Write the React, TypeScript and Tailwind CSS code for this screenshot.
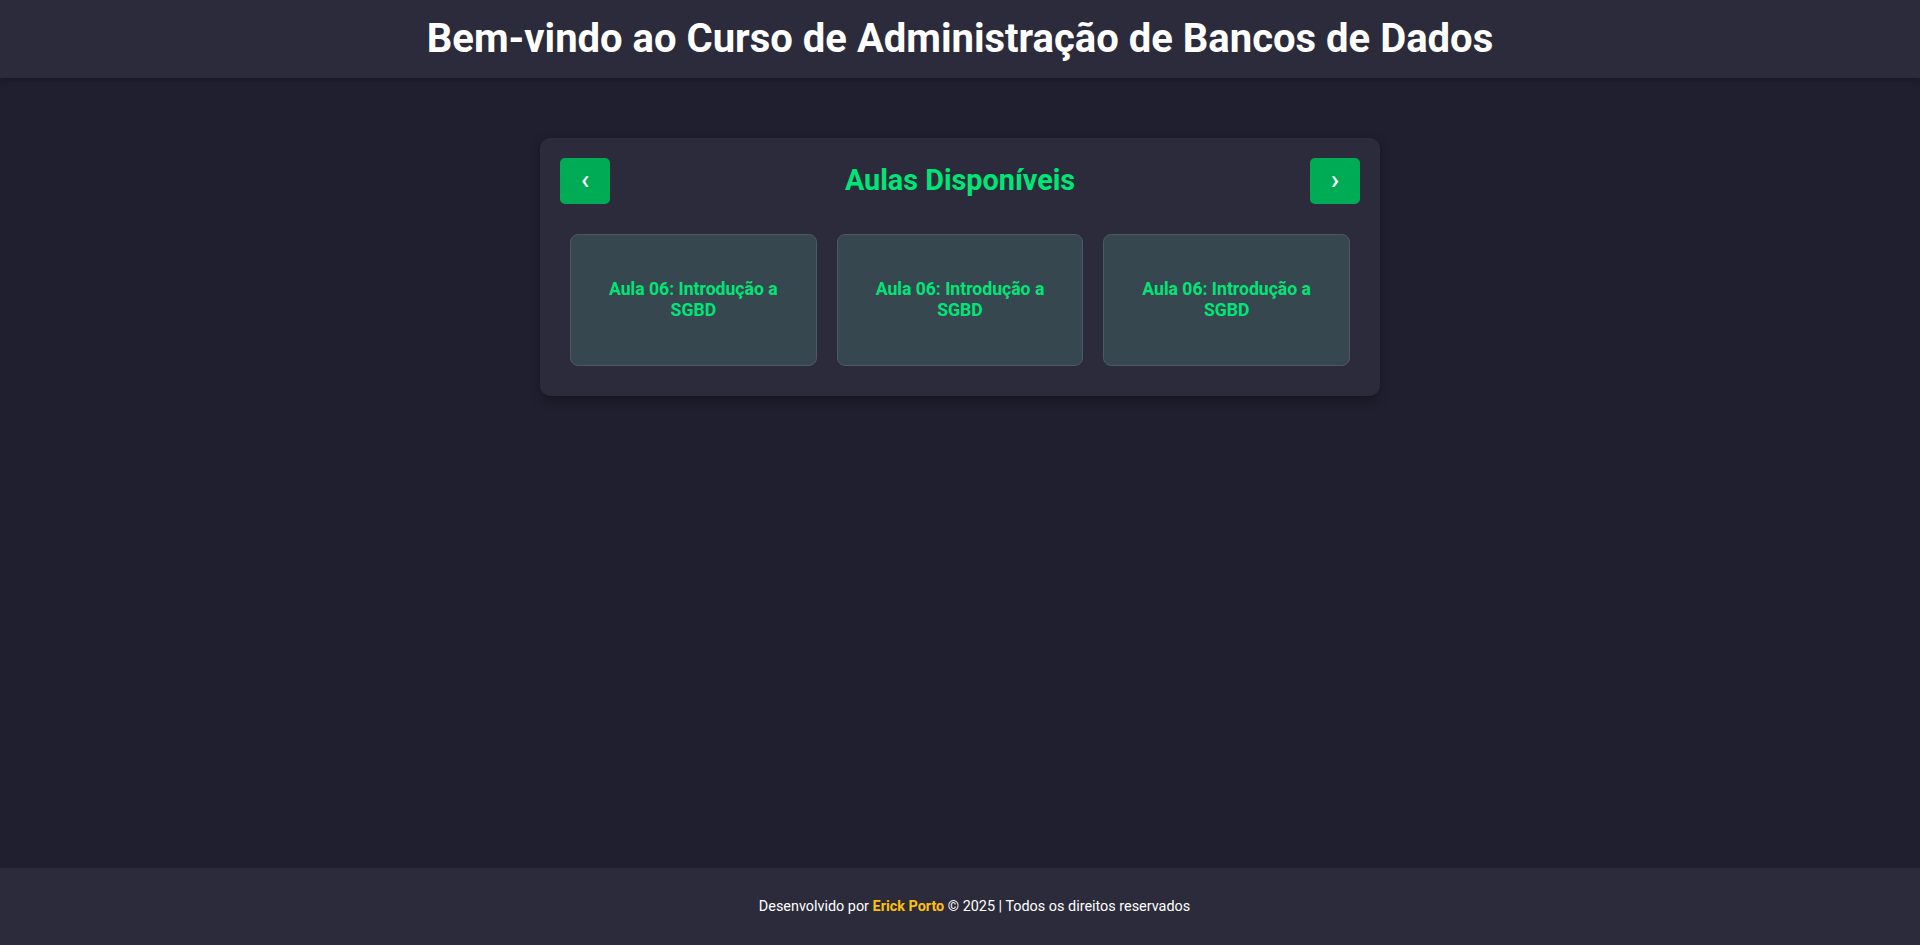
import { useState } from "react";

interface Aula {
  id: number
  titulo: string
}

const aulas: Aula[] = [
  { id: 1, titulo: "Aula 06: Introdução a SGBD" },
  { id: 2, titulo: "Aula 06: Introdução a SGBD" },
  { id: 3, titulo: "Aula 06: Introdução a SGBD" },
];

function NavButton({ label, onClick }: { label: string; onClick: () => void }) {
  return (
    <button
      onClick={onClick}
      className="flex h-[46px] w-[50px] items-center justify-center rounded-[5px] bg-[#00ab55] pb-[2px] text-[28px] leading-none font-medium text-white"
    >
      {label}
    </button>
  );
}

export default function App() {
  const [page, setPage] = useState(0);

  return (
    <div className="flex min-h-screen flex-col bg-[#1f1f2f] font-['Roboto',sans-serif]">
      <header className="flex h-[78px] items-center justify-center bg-[#2b2b3b] shadow-[0_2px_6px_rgba(0,0,0,0.25)]">
        <h1 className="text-[40px] font-bold text-white">
          Bem-vindo ao Curso de Administração de Bancos de Dados
        </h1>
      </header>

      <main className="flex flex-1 justify-center pt-[60px]">
        <section className="h-fit w-[840px] rounded-[10px] bg-[#2b2b3b] p-5 shadow-[0_4px_12px_rgba(0,0,0,0.3)]">
          <div className="flex items-center justify-between">
            <NavButton label="‹" onClick={() => setPage((p) => Math.max(0, p - 1))} />
            <h2 className="text-[28.8px] font-bold text-[#00e676]">Aulas Disponíveis</h2>
            <NavButton label="›" onClick={() => setPage((p) => p + 1)} />
          </div>

          <div className="mt-5 grid grid-cols-3 gap-5 p-[10px]" data-page={page}>
            {aulas.map((aula) => (
              <div
                key={aula.id}
                className="flex h-[132px] items-center justify-center rounded-[8px] border border-[#4b5a63] bg-[#37474f] px-6 text-center"
              >
                <h3 className="text-[17.6px] leading-[21px] font-bold text-[#00e676]">{aula.titulo}</h3>
              </div>
            ))}
          </div>
        </section>
      </main>

      <footer className="flex h-[77px] items-center justify-center bg-[#2b2b3b] text-[14.4px] text-white">
        <p className="pl-[29px]">
          Desenvolvido por <span className="font-bold text-[#ffc107]">Erick Porto</span> © 2025 | Todos os direitos reservados
        </p>
      </footer>
    </div>
  );
}
